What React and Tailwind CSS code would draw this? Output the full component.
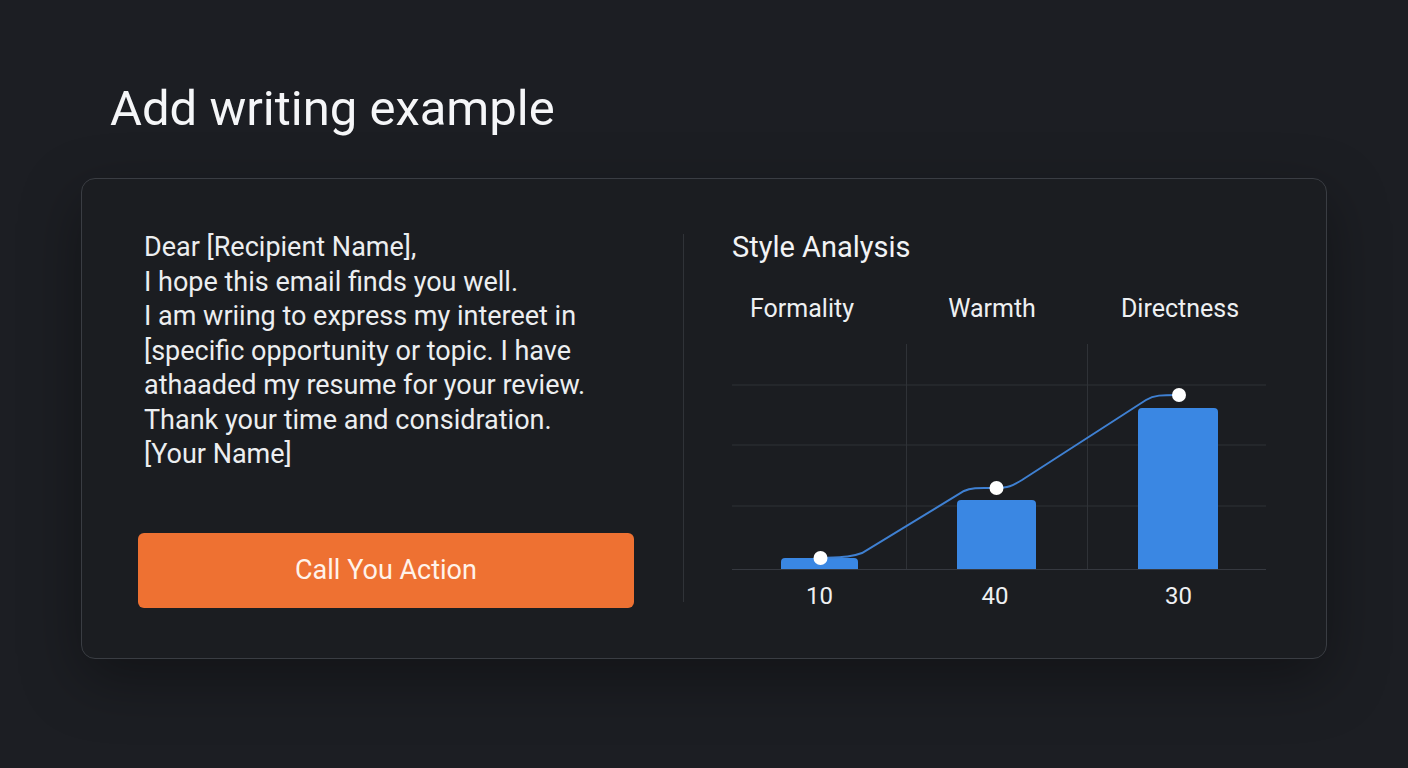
export default function App() {
  const emailLines = [
    "Dear [Recipient Name],",
    "I hope this email finds you well.",
    "I am wriing to express my intereet in",
    "[specific opportunity or topic. I have",
    "athaaded my resume for your review.",
    "Thank your time and considration.",
    "[Your Name]",
  ];

  return (
    <div className="min-h-screen w-full bg-[#1c1e23] font-['Roboto',sans-serif] text-[#eef0f2]">
      <div className="pt-[85px] px-[81px] pb-[110px]">
        <h1 className="pl-[29px] text-[49px] leading-[48px] font-normal text-[#f5f6f8]">Add writing example</h1>

        {/* Card */}
        <div className="mt-[45px] w-[1246px] rounded-[14px] border border-[#3a3d43] bg-[#1b1d21] shadow-[0_20px_60px_rgba(0,0,0,0.35)] flex pt-[51px] pb-[48px] pl-[56px] pr-[59px]">
          {/* Left column */}
          <div className="w-[496px] shrink-0 flex flex-col">
            <div className="ml-[6px] text-[27px] leading-[34.5px] text-[#eceef0]">
              {emailLines.map((l) => (
                <div key={l} className="whitespace-nowrap">{l}</div>
              ))}
            </div>
            <button className="mt-[61.5px] h-[75px] w-full rounded-[6px] bg-[#ee7132] text-[27px] text-[#fff3ea]">
              Call You Action
            </button>
          </div>

          <div className="ml-[49px] mr-[48px] mt-[4px] mb-[8px] w-px shrink-0 bg-[#303338]" />

          {/* Right column */}
          <div className="w-[534px] shrink-0 flex flex-col">
            <h2 className="text-[29px] leading-[34px] text-[#f2f3f5]">Style Analysis</h2>
            <div className="mt-[30px] flex text-[25px] leading-[30px] text-[#eef0f2]">
              <div className="w-[140px] shrink-0 text-center">Formality</div>
              <div className="w-[240px] shrink-0 text-center">Warmth</div>
              <div className="w-[136px] shrink-0 text-center">Directness</div>
            </div>
            <svg className="mt-[19.5px]" width="534" height="227" viewBox="0 0 534 227">
              <g stroke="#2f3237" strokeWidth="1">
                <line x1="0" y1="41" x2="534" y2="41" />
                <line x1="0" y1="101" x2="534" y2="101" />
                <line x1="0" y1="162" x2="534" y2="162" />
                <line x1="174.5" y1="0" x2="174.5" y2="225" />
                <line x1="355.5" y1="0" x2="355.5" y2="225" />
              </g>
              <path d="M49 225 V218 a4 4 0 0 1 4 -4 H122 a4 4 0 0 1 4 4 V225 Z" fill="#3a87e3" />
              <path d="M225 225 V160 a4 4 0 0 1 4 -4 H300 a4 4 0 0 1 4 4 V225 Z" fill="#3a87e3" />
              <path d="M406 225 V68 a4 4 0 0 1 4 -4 H482 a4 4 0 0 1 4 4 V225 Z" fill="#3a87e3" />
              <line x1="0" y1="225.5" x2="534" y2="225.5" stroke="#363940" strokeWidth="1" />
              <path
                d="M88 214 C110 213, 120 213, 130 209 L232 147 C240 143, 250 144, 264 144 C276 144, 280 142, 290 136 L414 56 C422 51, 430 51, 446 51"
                fill="none"
                stroke="#3f80d2"
                strokeWidth="2"
              />
              <circle cx="88.5" cy="214" r="7" fill="#ffffff" />
              <circle cx="264.5" cy="144" r="7" fill="#ffffff" />
              <circle cx="447" cy="51" r="7" fill="#ffffff" />
            </svg>
            <div className="mt-[11px] flex text-[24px] leading-[28px] text-[#eef0f2]">
              <div className="w-[175px] shrink-0 text-center">10</div>
              <div className="w-[176px] shrink-0 text-center">40</div>
              <div className="w-[191px] shrink-0 text-center">30</div>
            </div>
          </div>
        </div>
      </div>
    </div>
  );
}
